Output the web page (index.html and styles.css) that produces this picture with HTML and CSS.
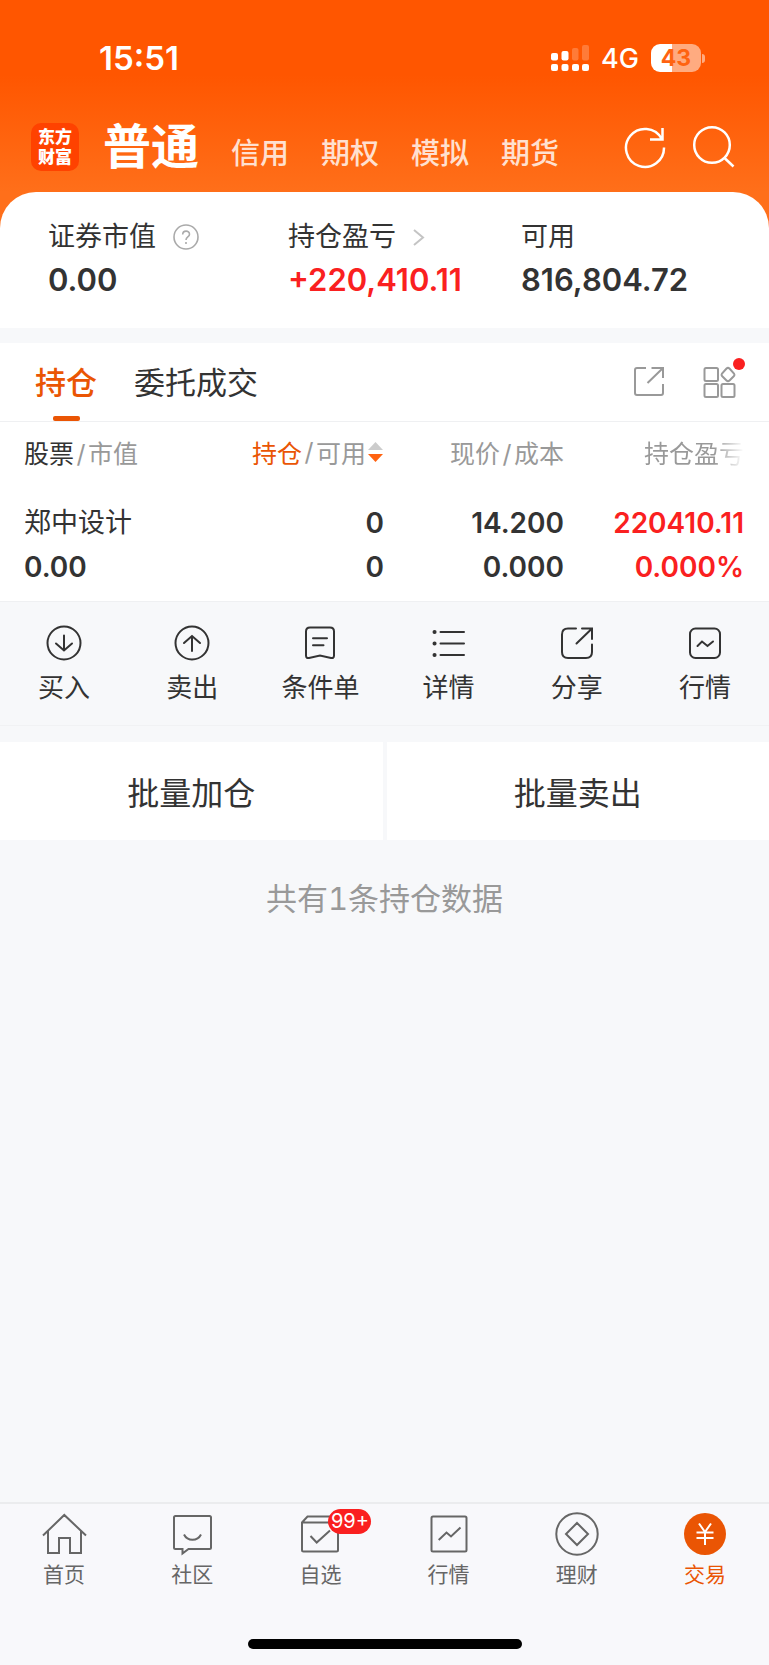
FILE: index.html
```html
<!DOCTYPE html>
<html lang="zh-CN">
<head>
<meta charset="utf-8">
<meta name="viewport" content="width=device-width, initial-scale=1">
<title>交易 - 普通</title>
<link rel="stylesheet" href="styles.css">
</head>
<body>
<div class="hero">
  <div class="status">
    <time class="status-time">15:51</time>
    <div class="status-right">
      <svg class="signal" width="38" height="28" viewBox="0 0 38 28" fill="#fff" aria-hidden="true">
        <rect x="0" y="9" width="7" height="7.500" rx="2"/><rect x="10.500" y="7" width="7" height="9.500" rx="2"/>
        <rect x="21" y="4" width="6.500" height="12.500" rx="2" opacity=".22"/><rect x="31" y="1" width="7" height="15.500" rx="2" opacity=".22"/>
        <rect x="0" y="20" width="7" height="7" rx="2"/><rect x="10.500" y="20" width="7" height="7" rx="2"/>
        <rect x="21" y="20" width="7" height="7" rx="2"/><rect x="31" y="20" width="7" height="7" rx="2"/>
      </svg>
      <span class="network">4G</span>
      <span class="battery"><span class="battery-level">43</span><span class="battery-tip"></span></span>
    </div>
  </div>
  <header class="header">
    <div class="logo"><span>东方</span><span>财富</span></div>
    <nav class="accounts" aria-label="账户类型">
      <a class="account account-active" href="#normal">普通</a>
      <a class="account" href="#credit">信用</a>
      <a class="account" href="#option">期权</a>
      <a class="account" href="#demo">模拟</a>
      <a class="account" href="#future">期货</a>
    </nav>
    <div class="header-tools">
      <button class="icon-button" type="button" aria-label="刷新">
        <svg width="44" height="44" viewBox="0 0 44 44" fill="none" stroke="#fff" stroke-width="2.500"><path d="M41 22.500A19 19 0 1 1 38.500 13.500M39.500 3V14.500H27"/></svg>
      </button>
      <button class="icon-button" type="button" aria-label="搜索">
        <svg width="44" height="44" viewBox="0 0 44 44" fill="none" stroke="#fff" stroke-width="2.500"><circle cx="20" cy="20" r="17.800"/><path d="M32 32.500L41.500 41.500"/></svg>
      </button>
    </div>
  </header>
  <section class="summary">
    <div class="stat">
      <div class="stat-label">证券市值
        <button class="icon-button help" type="button" aria-label="说明"><svg width="26" height="26" viewBox="0 0 26 26" fill="none" stroke="#aaa" stroke-width="1.600"><circle cx="13" cy="13" r="12"/><path d="M9.700 10.500C9.700 6 16.500 6 16.500 10.200C16.500 13 13 13 13 16M13 18V20"/></svg></button>
      </div>
      <div class="stat-value">0.00</div>
    </div>
    <div class="stat">
      <div class="stat-label">持仓盈亏
        <svg width="12" height="18" viewBox="0 0 12 18" fill="none" stroke="#c4c4c4" stroke-width="2" aria-hidden="true"><path d="M1 2L10 9.500L1 17"/></svg>
      </div>
      <div class="stat-value rise">+220,410.11</div>
    </div>
    <div class="stat">
      <div class="stat-label">可用</div>
      <div class="stat-value">816,804.72</div>
    </div>
  </section>
</div>
<main class="main">
  <div class="tabs">
    <button class="tab tab-active" type="button">持仓</button>
    <button class="tab" type="button">委托成交</button>
    <div class="tab-tools">
      <button class="icon-button" type="button" aria-label="分享持仓">
        <svg width="36" height="36" viewBox="0 0 36 36" fill="none" stroke="#999" stroke-width="2"><path d="M15 4H6Q4 4 4 6V29Q4 31 6 31H30Q32 31 32 29V20M20.500 4H32V14M32 4L16.500 19"/></svg>
      </button>
      <button class="icon-button" type="button" aria-label="更多功能">
        <svg width="36" height="36" viewBox="0 0 36 36" fill="none" stroke="#999" stroke-width="2"><rect x="3.500" y="4" width="13.500" height="13" rx="1.500"/><rect x="3.500" y="20" width="13.500" height="13" rx="1.500"/><rect x="20.500" y="20" width="13" height="13" rx="1.500"/><path d="M25.500 4.500Q27 3.300 28.500 4.500L33 9.500Q34 11 33 12L28.500 16.500Q27 18 25.500 16.500L21 12Q20 11 21 9.500Z"/></svg>
        <span class="dot"></span>
      </button>
    </div>
  </div>
  <div class="holdings">
    <table class="table">
      <thead>
        <tr>
          <th scope="col"><span class="strong">股票</span><span class="slash">/</span>市值</th>
          <th scope="col"><button class="sort" type="button"><span class="accent">持仓</span><span class="slash">/</span>可用<svg width="18" height="22" viewBox="0 0 18 22" aria-hidden="true"><path d="M2 9L9.500 1L17 9Z" fill="#ccc"/><path d="M2 13H17L9.500 21Z" fill="#ff6210"/></svg></button></th>
          <th scope="col">现价<span class="slash">/</span>成本</th>
          <th scope="col"><span class="fade">持仓盈亏</span></th>
        </tr>
      </thead>
      <tbody>
        <tr>
          <td><div class="name">郑中设计</div><div>0.00</div></td>
          <td><div>0</div><div>0</div></td>
          <td><div>14.200</div><div>0.000</div></td>
          <td class="rise"><div>220410.11</div><div>0.000%</div></td>
        </tr>
      </tbody>
    </table>
  </div>
  <div class="actions">
    <button class="action" type="button"><svg class="action-icon" viewBox="0 0 40 40"><circle cx="20" cy="20" r="16.500"/><path d="M20 12.500V27.500M12 20.500L20 27.500L28 20.500"/></svg>买入</button>
    <button class="action" type="button"><svg class="action-icon" viewBox="0 0 40 40"><circle cx="20" cy="20" r="16.500"/><path d="M20 28V13M12 20L20 13L28 20"/></svg>卖出</button>
    <button class="action" type="button"><svg class="action-icon" viewBox="0 0 40 40"><path d="M10 4.500H30Q34 4.500 34 8.500V32.500Q34 35.500 31 35L20 32.500L9 35Q6 35.500 6 32.500V8.500Q6 4.500 10 4.500ZM13 15.300H27M13 22.200H23.500"/></svg>条件单</button>
    <button class="action" type="button"><svg class="action-icon" viewBox="0 0 40 40"><path d="M11.500 9H35M11.500 20.500H35M11.500 32H35"/><path stroke-width="4" d="M5.500 9H5.600M5.500 20.500H5.600M5.500 32H5.600"/></svg>详情</button>
    <button class="action" type="button"><svg class="action-icon" viewBox="0 0 40 40"><path d="M19 5.500H11Q5 5.500 5 11.500V29Q5 35 11 35H29Q35 35 35 29V21.500M25 5.500H35V16M34.500 6L19.500 20.500"/></svg>分享</button>
    <button class="action" type="button"><svg class="action-icon" viewBox="0 0 40 40"><rect x="5" y="5.500" width="30" height="29.500" rx="5.500"/><path d="M12.500 23L17 18.500L22.500 23L28 18.500"/></svg>行情</button>
  </div>
  <div class="batch">
    <button class="batch-button" type="button">批量加仓</button>
    <button class="batch-button" type="button">批量卖出</button>
  </div>
  <p class="count">共有1条持仓数据</p>
</main>
<footer class="footer">
  <nav class="bottom-nav" aria-label="主导航">
    <a class="nav-item" href="#home"><svg class="nav-icon" viewBox="0 0 48 48"><path d="M3 25.500L24.300 5L46 25.500M8 21V43H19V28H30V43H41V21"/></svg>首页</a>
    <a class="nav-item" href="#community"><svg class="nav-icon" viewBox="0 0 48 48"><path d="M7.500 6H41.500Q43 6 43 7.500V37.500Q43 39 41.500 39H20.500L14.500 43.500V39H7.500Q6 39 6 37.500V7.500Q6 6 7.500 6ZM16 24.500C19.500 31.500 29.500 31.500 33 24.500"/></svg>社区</a>
    <a class="nav-item" href="#watch"><span class="nav-picture"><svg class="nav-icon" viewBox="0 0 48 48"><path d="M6 12.500L11.500 6.500H37L42 12.500V40Q42 41.500 40.500 41.500H7.500Q6 41.500 6 40ZM6 12.500H42M14.500 26L20.700 32.500L34 20.500"/></svg><span class="badge">99+</span></span>自选</a>
    <a class="nav-item" href="#market"><svg class="nav-icon" viewBox="0 0 48 48"><rect x="6.500" y="6.500" width="35" height="35" rx="1.500"/><path d="M13.700 30L21.500 22.500L26 26.500L35.500 17.500"/></svg>行情</a>
    <a class="nav-item" href="#wealth"><svg class="nav-icon" viewBox="0 0 48 48"><circle cx="24" cy="24" r="20.700"/><path d="M24 13L35 24L24 35L13 24Z"/></svg>理财</a>
    <a class="nav-item nav-active" href="#trade" aria-current="page"><svg class="nav-icon" viewBox="0 0 48 48"><circle cx="24" cy="24" r="21" fill="#ea5504" stroke="none"/><path stroke="#fff" d="M18 13.500L24 22L30 13.500M24 22V35M15.500 22.500H32.500M15.500 28H32.500"/></svg>交易</a>
  </nav>
  <div class="home-bar"></div>
</footer>
</body>
</html>
```
FILE: styles.css
```css
* {
  box-sizing: border-box;
}

body {
  margin: 0;
  min-height: 100vh;
  display: flex;
  flex-direction: column;
  background: #f7f8fa;
  color: #333;
  font-family: Inter, "Noto Sans CJK SC", sans-serif;
}

button {
  margin: 0;
  padding: 0;
  border: 0;
  background: none;
  color: inherit;
  font: inherit;
}

a {
  color: inherit;
  text-decoration: none;
}

svg {
  display: block;
  flex: none;
}

.icon-button {
  position: relative;
  display: block;
}

.rise {
  color: #fa2020;
}

.accent {
  color: #ea5504;
}

/* Status bar and header */
.hero {
  background: linear-gradient(#ff5600 75px, #ff6f1a 192px);
}

.status {
  display: flex;
  align-items: center;
  justify-content: space-between;
  height: 90px;
  padding: 26px 64px 0 99px;
  color: #fff;
}

.status-time {
  font-size: 33px;
  font-weight: 600;
}

.status-right {
  display: flex;
  align-items: center;
}

.network {
  margin: 0 12px;
  font-size: 27px;
  font-weight: 500;
}

.battery {
  display: flex;
  align-items: center;
  gap: 1px;
}

.battery-level {
  width: 50px;
  border-radius: 9px;
  background: linear-gradient(90deg, #fff 43%, #ffab80 43%);
  color: #ff6310;
  font-size: 23px;
  font-weight: 700;
  line-height: 28px;
  text-align: center;
}

.battery-tip {
  width: 3px;
  height: 9px;
  border-radius: 0 4px 4px 0;
  background: #ffab80;
}

.header {
  display: flex;
  align-items: center;
  height: 102px;
  padding: 12px 33px 0 31px;
  color: #fff;
}

.logo {
  display: flex;
  flex-direction: column;
  align-items: center;
  justify-content: center;
  width: 48px;
  height: 48px;
  border-radius: 10px;
  background: #ff4200;
  font-size: 17px;
  font-weight: 900;
  line-height: 20px;
}

.accounts {
  display: flex;
  flex: 1;
  align-items: baseline;
  gap: 32px;
  margin-left: 24px;
  padding-top: 6px;
}

.account {
  color: #ffe0d0;
  font-size: 29px;
  font-weight: 500;
  line-height: 56px;
}

.account-active {
  color: #fff;
  font-size: 48px;
  font-weight: 700;
}

.header-tools {
  display: flex;
  gap: 25px;
}

/* Account summary */
.summary {
  display: grid;
  grid-template-columns: 240fr 233fr 200fr;
  padding: 26px 48px 24px;
  border-radius: 36px 36px 0 0;
  background: #fff;
}

.stat-label {
  display: flex;
  align-items: center;
  gap: 17px;
  font-size: 27px;
  line-height: 38px;
}

.stat-value {
  font-size: 31px;
  font-weight: 600;
  line-height: 48px;
}

/* Position tabs */
.main {
  flex: 1;
  padding-top: 15px;
}

.tabs {
  display: flex;
  align-items: center;
  gap: 37px;
  height: 79px;
  padding: 0 32px 0 35px;
  border-bottom: 1px solid #eff0f2;
  background: #fff;
}

.tab {
  position: relative;
  height: 78px;
  padding-bottom: 4px;
  font-size: 31px;
}

.tab-active {
  color: #ea5504;
  font-weight: 500;
}

.tab-active::after {
  content: "";
  position: absolute;
  bottom: 0;
  left: calc(50% - 13px);
  width: 27px;
  height: 5px;
  border-radius: 2px;
  background: #ea5504;
}

.tab-tools {
  display: flex;
  gap: 34px;
  margin-left: auto;
}

.dot {
  position: absolute;
  top: -6px;
  right: -8px;
  width: 12px;
  height: 12px;
  border-radius: 50%;
  background: #fa2020;
}

/* Holdings table */
.holdings {
  padding: 0 25px 0 24px;
  border-bottom: 1px solid #eff0f2;
  background: #fff;
}

.table {
  width: 100%;
  border-collapse: collapse;
  table-layout: fixed;
}

.table th {
  height: 60px;
  padding: 0;
  color: #999;
  font-size: 25px;
  font-weight: 400;
  text-align: right;
  white-space: nowrap;
}

.table td {
  padding: 19px 0 12px;
  font-size: 28px;
  font-weight: 600;
  line-height: 44px;
  text-align: right;
}

.table th:first-child,
.table td:first-child {
  text-align: left;
}

.table .name {
  font-size: 27px;
  font-weight: 400;
}

.strong {
  color: #333;
}

.slash {
  display: inline-block;
  width: 14px;
  text-align: center;
}

.sort {
  display: inline-flex;
  align-items: center;
}

.fade {
  background: linear-gradient(90deg, #999 70%, #fff);
  background-clip: text;
  color: transparent;
}

/* Row actions */
.actions {
  display: grid;
  grid-template-columns: repeat(6, 1fr);
  padding: 21px 0 18px;
  border-bottom: 1px solid #f1f2f4;
}

.action {
  display: flex;
  flex-direction: column;
  align-items: center;
  gap: 6px;
  font-size: 26px;
  line-height: 38px;
}

.action-icon {
  width: 40px;
  height: 40px;
  fill: none;
  stroke: #333;
  stroke-width: 2;
  stroke-linecap: round;
}

.batch {
  display: grid;
  grid-template-columns: 1fr 1fr;
  gap: 4px;
  margin-top: 16px;
}

.batch-button {
  height: 98px;
  background: #fff;
  font-size: 32px;
}

.count {
  margin: 36px 0;
  color: #999;
  font-size: 31px;
  font-variant-numeric: tabular-nums;
  line-height: 46px;
  text-align: center;
}

/* Bottom navigation */
.footer {
  padding-bottom: 16px;
  border-top: 2px solid #ebecee;
  background: #f8f8fb;
}

.bottom-nav {
  display: grid;
  grid-template-columns: repeat(6, 1fr);
  padding-top: 6px;
}

.nav-item {
  display: flex;
  flex-direction: column;
  align-items: center;
  gap: 5px;
  color: #666;
  font-size: 21px;
  line-height: 24px;
}

.nav-active {
  color: #ea5504;
}

.nav-icon {
  width: 48px;
  height: 48px;
  fill: none;
  stroke: #666;
  stroke-width: 2;
}

.nav-picture {
  position: relative;
}

.badge {
  position: absolute;
  top: -1px;
  left: 32px;
  width: 43px;
  border-radius: 13px;
  background: #fa2020;
  color: #fff;
  font-size: 20px;
  line-height: 25px;
  text-align: center;
}

.home-bar {
  width: 274px;
  height: 10px;
  margin: 52px auto 0;
  border-radius: 5px;
  background: #000;
}
```
